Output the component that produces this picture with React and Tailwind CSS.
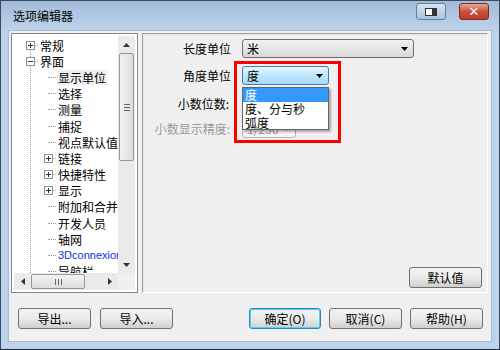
import React from "react";

const font = { fontFamily: '"Noto Sans CJK SC", "Liberation Sans", sans-serif' };

const treeItems = [
  { level: 0, box: "+", text: "常规" },
  { level: 0, box: "-", text: "界面" },
  { level: 1, text: "显示单位", sel: true },
  { level: 1, text: "选择" },
  { level: 1, text: "测量" },
  { level: 1, text: "捕捉" },
  { level: 1, text: "视点默认值" },
  { level: 1, box: "+", text: "链接" },
  { level: 1, box: "+", text: "快捷特性" },
  { level: 1, box: "+", text: "显示" },
  { level: 1, text: "附加和合并" },
  { level: 1, text: "开发人员" },
  { level: 1, text: "轴网" },
  { level: 1, text: "3Dconnexion", blue: true },
  { level: 1, text: "导航栏" },
];

function Box({ sign }) {
  return (
    <span className="w-[9px] h-[9px] border border-[#919191] bg-white flex items-center justify-center relative shrink-0">
      <span className="absolute w-[5px] h-px bg-[#1e395b]" />
      {sign === "+" && <span className="absolute w-px h-[5px] bg-[#1e395b]" />}
    </span>
  );
}

function Btn({ children, className = "", focus }) {
  return (
    <div
      className={
        "h-[21px] rounded-[3px] border flex items-center justify-center text-[12px] text-black bg-gradient-to-b from-[#f2f2f2] via-[#ebebeb] to-[#cfcfcf] " +
        (focus ? "border-[#3c7fb1] shadow-[inset_0_0_0_1px_#48d7f6]" : "border-[#707070]") +
        " " + className
      }
    >
      {children}
    </div>
  );
}

function Arrow({ color = "#000" }) {
  return (
    <svg width="7" height="4" viewBox="0 0 7 4">
      <path d="M0 0h7L3.5 4z" fill={color} />
    </svg>
  );
}

export default function App() {
  return (
    <div className="w-[500px] h-[350px] bg-[#bcd2ea] flex flex-col overflow-hidden border-b border-[#1e2b3c]" style={font}>
      {/* title bar */}
      <div className="h-[30px] shrink-0 bg-gradient-to-b from-[#a2bbd7] to-[#bdd3eb] flex items-center pl-[12px] pr-[10px] border-l border-r border-t border-[#3a4b5f]">
        <span className="text-[12px] text-black">选项编辑器</span>
        <div className="ml-auto flex items-center gap-[13px] -mt-[8px]">
          <div className="w-[30px] h-[17px] rounded-[3px] border border-[#5f7ea3] bg-gradient-to-b from-[#d8e5f2] to-[#aec3dc] flex items-center justify-center">
            <div className="w-[12px] h-[8px] border border-[#333] bg-white flex justify-end">
              <div className="w-[4px] h-full bg-[#333]" />
            </div>
          </div>
          <div className="w-[30px] h-[17px] rounded-[3px] border border-[#7a2a20] bg-gradient-to-b from-[#e8a496] via-[#c8503c] to-[#c23b26] flex items-center justify-center">
            <span className="text-white font-bold text-[13px] leading-none" style={{ fontFamily: '"DejaVu Sans", sans-serif' }}>✕</span>
          </div>
        </div>
      </div>
      {/* frame */}
      <div className="flex-1 flex px-[7px] pb-[7px] border-l border-r border-[#3a4b5f]">
        <div className="flex-1 bg-[#f0f0f0] flex flex-col border border-[#a8bdd6]">
          <div className="flex pt-[2px] pl-[2px] gap-[4px]">
            {/* tree */}
            <div className="w-[127px] h-[260px] border border-[#828790] bg-white flex flex-col p-[2px]">
              <div className="flex flex-1 min-h-0">
                <div className="flex-1 overflow-hidden pt-[1px] relative">
                  <div className="absolute left-[16px] top-[11px] h-[240px] border-l border-dotted border-[#a0a0a0]" />
                  {treeItems.map((it, i) => (
                    <div key={i} className="h-[16.2px] flex items-center text-[12px] whitespace-nowrap relative" style={{ paddingLeft: it.level === 0 ? 12 : 30 }}>
                      <span className="w-[13px] h-full flex items-center shrink-0 relative">
                        {it.box ? (
                          <>
                            <Box sign={it.box} />
                            <span className="w-[3px] border-t border-dotted border-[#a0a0a0]" />
                          </>
                        ) : (
                          <span className="w-[8px] ml-[4px] border-t border-dotted border-[#a0a0a0]" />
                        )}
                      </span>
                      {it.blue ? (
                        <span className="px-[1px] leading-[15px] text-[11px] text-[#1430d8]" style={{ fontFamily: '"Liberation Sans", sans-serif' }}>{it.text}</span>
                      ) : (
                        <span className={"px-[1px] leading-[15px] text-black " + (it.sel ? "bg-[#f0f0f0]" : "")}>{it.text}</span>
                      )}
                    </div>
                  ))}
                </div>
                {/* vscroll */}
                <div className="w-[17px] bg-[#eaeaea] flex flex-col items-center">
                  <div className="h-[17px] flex items-center justify-center">
                    <svg width="7" height="4" viewBox="0 0 7 4"><path d="M3.5 0L7 4H0z" fill="#333" /></svg>
                  </div>
                  <div className="w-[15px] h-[108px] rounded-[2px] border border-[#979797] bg-gradient-to-r from-[#f3f3f3] to-[#dcdcdc] flex flex-col items-center justify-center gap-[2px]">
                    <div className="w-[6px] h-px bg-[#666]" />
                    <div className="w-[6px] h-px bg-[#666]" />
                    <div className="w-[6px] h-px bg-[#666]" />
                  </div>
                  <div className="flex-1" />
                  <div className="h-[17px] flex items-center justify-center">
                    <Arrow color="#333" />
                  </div>
                </div>
              </div>
              {/* hscroll */}
              <div className="h-[17px] flex bg-[#eaeaea]">
                <div className="flex-1 flex items-center">
                  <div className="w-[17px] flex justify-center">
                    <svg width="4" height="7" viewBox="0 0 4 7"><path d="M4 0v7L0 3.5z" fill="#333" /></svg>
                  </div>
                  <div className="w-[54px] h-[15px] rounded-[2px] border border-[#979797] bg-gradient-to-b from-[#f3f3f3] to-[#dcdcdc] flex items-center justify-center gap-[2px]">
                    <div className="w-px h-[6px] bg-[#666]" />
                    <div className="w-px h-[6px] bg-[#666]" />
                    <div className="w-px h-[6px] bg-[#666]" />
                  </div>
                  <div className="flex-1" />
                  <div className="w-[17px] flex justify-center">
                    <svg width="4" height="7" viewBox="0 0 4 7"><path d="M0 0v7L4 3.5z" fill="#333" /></svg>
                  </div>
                </div>
                <div className="w-[17px] bg-[#f0f0f0]" />
              </div>
            </div>
            {/* right panel */}
            <div className="w-[346px] h-[260px] border border-t-[#a0a0a0] border-l-[#a0a0a0] border-r-white border-b-white shadow-[inset_1px_1px_0_#e3e3e3] relative flex flex-col text-[12px]">
              <div className="flex flex-col pt-[5px] gap-[8px]">
                <div className="flex items-center h-[19px]">
                  <span className="w-[99px] text-right pr-[11px] text-black">长度单位</span>
                  <div className="w-[172px] h-[19px] rounded-[3px] border border-[#707070] bg-gradient-to-b from-[#f2f2f2] to-[#d9d9d9] flex items-center pl-[4px] pr-[5px]">
                    <span>米</span>
                    <span className="ml-auto"><Arrow /></span>
                  </div>
                </div>
                <div className="flex items-center h-[19px]">
                  <span className="w-[99px] text-right pr-[11px] text-black">角度单位</span>
                  <div className="w-[87px] h-[19px] rounded-[3px] border border-[#3c7fb1] bg-gradient-to-b from-[#eaf6fd] via-[#bee6fd] to-[#a7d9f5] flex items-center pl-[4px] pr-[5px]">
                    <span>度</span>
                    <span className="ml-auto"><Arrow /></span>
                  </div>
                </div>
                <div className="flex items-center h-[19px] mt-[1px]">
                  <span className="w-[99px] text-right pr-[13px] text-black whitespace-nowrap">小数位数:</span>
                </div>
                <div className="flex items-center h-[19px] -mt-[2px]">
                  <span className="w-[99px] text-right pr-[12px] text-[#9a9a9a] whitespace-nowrap">小数显示精度:</span>
                  <div className="w-[54px] h-[19px] rounded-[3px] border border-[#b5b5b5] bg-[#f4f4f4] flex items-center pl-[4px] pr-[5px] text-[#9a9a9a]">
                    <span>1/256</span>
                    <span className="ml-auto"><Arrow color="#a0a0a0" /></span>
                  </div>
                </div>
              </div>
              <div className="flex-1" />
              <div className="flex justify-end pr-[5px] pb-[4px]">
                <Btn className="w-[73px]">默认值</Btn>
              </div>
              {/* dropdown list */}
              <div className="absolute left-[99px] top-[53px] w-[87px] border border-[#646464] bg-white shadow-[2px_2px_2px_rgba(0,0,0,0.3)] flex flex-col">
                <div className="h-[14px] leading-[14px] bg-[#3399ff] text-white pl-[2px]">度</div>
                <div className="h-[14px] leading-[14px] pl-[2px]">度、分与秒</div>
                <div className="h-[13px] leading-[13px] pl-[2px]">弧度</div>
              </div>
              {/* red annotation box */}
              <div className="absolute left-[91px] top-[27px] w-[107px] h-[82px] border-[3px] border-[#ff0000]" />
            </div>
          </div>
          {/* bottom buttons */}
          <div className="flex items-center pt-[15px] pl-[9px]">
            <Btn className="w-[73px]">导出...</Btn>
            <Btn className="w-[73px] ml-[9px]">导入...</Btn>
            <Btn className="w-[72px] ml-[76px]" focus>确定(O)</Btn>
            <Btn className="w-[73px] ml-[8px]">取消(C)</Btn>
            <Btn className="w-[73px] ml-[8px]">帮助(H)</Btn>
          </div>
        </div>
      </div>
    </div>
  );
}
